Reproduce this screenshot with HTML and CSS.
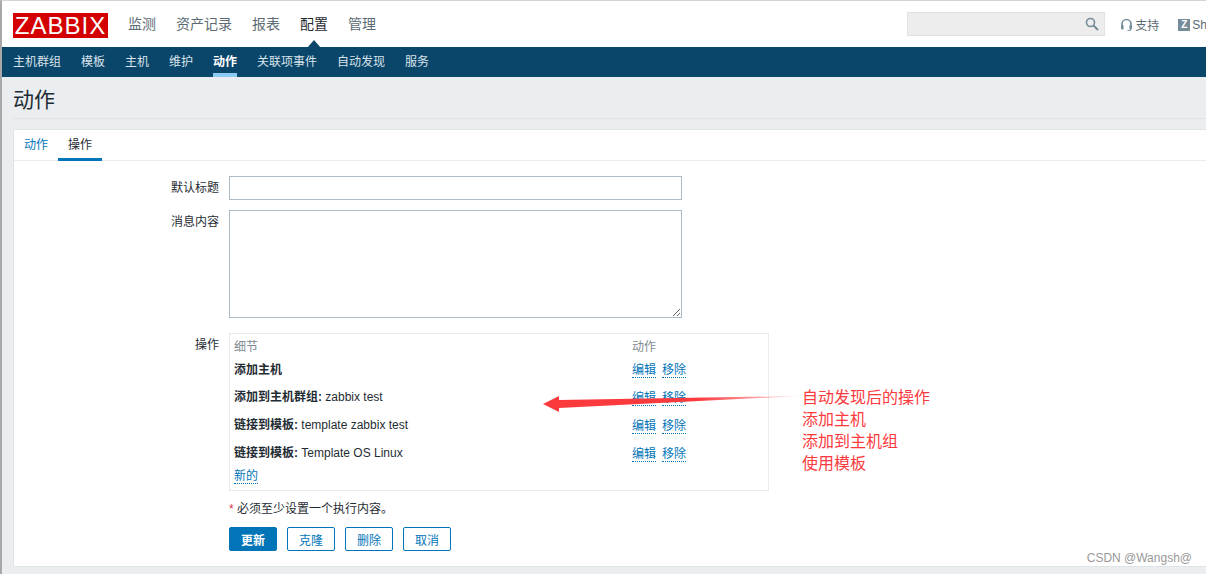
FILE: index.html
```html
<!DOCTYPE html>
<html lang="zh">
<head>
<meta charset="utf-8">
<title>动作</title>
<link rel="stylesheet" href="styles.css">
</head>
<body>
<div class="page">
  <header class="top">
    <div class="logo">ZABBIX</div>
    <nav class="main-nav">
      <a>监测</a><a>资产记录</a><a>报表</a><a class="on">配置</a><a>管理</a>
    </nav>
    <div class="top-right">
      <div class="search">
        <svg width="14" height="14" viewBox="0 0 14 14"><circle cx="5.500" cy="5.500" r="4" fill="none" stroke="#768d99" stroke-width="1.600"/><path d="M8.500 8.500L13 13" stroke="#768d99" stroke-width="2"/></svg>
      </div>
      <a class="support">
        <svg width="13" height="14" viewBox="0 0 13 14"><path d="M2 9V6a4.500 4.500 0 0 1 9 0v3" fill="none" stroke="#768d99" stroke-width="1.600"/><rect x="1" y="7" width="2.600" height="4.400" rx="1" fill="#768d99"/><rect x="9.400" y="7" width="2.600" height="4.400" rx="1" fill="#768d99"/><path d="M10.500 11v1.400H7.500" fill="none" stroke="#768d99" stroke-width="1"/></svg>
        支持
      </a>
      <a class="share"><span class="zbox">Z</span>Sh</a>
    </div>
  </header>
  <nav class="sub-nav">
    <a>主机群组</a><a>模板</a><a>主机</a><a>维护</a><a class="on">动作</a><a>关联项事件</a><a>自动发现</a><a>服务</a>
  </nav>
  <main class="content">
    <h1 class="title">动作</h1>
    <section class="card">
      <div class="tabs"><a>动作</a><a class="on">操作</a></div>
      <form class="form">
        <div class="row row-input">
          <label>默认标题</label>
          <input class="text" type="text">
        </div>
        <div class="row row-area">
          <label>消息内容</label>
          <textarea class="area"></textarea>
        </div>
        <div class="row row-ops">
          <label>操作</label>
          <div class="ops">
            <div class="ops-row ops-head"><span class="detail">细节</span><span>动作</span></div>
            <div class="ops-row r1"><span class="detail"><b>添加主机</b></span><span class="acts"><a>编辑</a><a>移除</a></span></div>
            <div class="ops-row r2"><span class="detail"><b>添加到主机群组:</b> zabbix test</span><span class="acts"><a>编辑</a><a>移除</a></span></div>
            <div class="ops-row r2"><span class="detail"><b>链接到模板:</b> template zabbix test</span><span class="acts"><a>编辑</a><a>移除</a></span></div>
            <div class="ops-row r2"><span class="detail"><b>链接到模板:</b> Template OS Linux</span><span class="acts"><a>编辑</a><a>移除</a></span></div>
            <a class="new">新的</a>
          </div>
        </div>
        <p class="note"><span class="star">*</span> 必须至少设置一个执行内容。</p>
        <div class="buttons">
          <button type="button" class="btn primary">更新</button>
          <button type="button" class="btn">克隆</button>
          <button type="button" class="btn">删除</button>
          <button type="button" class="btn">取消</button>
        </div>
      </form>
    </section>
  </main>
  <svg class="arrow" width="262" height="24" viewBox="0 0 262 24"><defs><linearGradient id="fade" x1="0" x2="1" y1="0" y2="0"><stop offset="0" stop-color="#fb3a3e"/><stop offset="0.6" stop-color="#fb3a3e"/><stop offset="1" stop-color="#fb3a3e" stop-opacity="0.1"/></linearGradient></defs><path d="M0 11L16 3L16 7L258 3L16 15L16 19Z" fill="url(#fade)"/></svg>
  <div class="annotation">自动发现后的操作<br>添加主机<br>添加到主机组<br>使用模板</div>
  <div class="mark">CSDN @Wangsh@</div>
</div>
</body>
</html>
```
FILE: styles.css
```css
* { box-sizing: border-box; }
html, body { margin: 0; height: 100%; overflow: hidden; background: #fff; }
body { font: 12px "Liberation Sans", "Noto Sans CJK SC", sans-serif; color: #1f2c33; }
a { text-decoration: none; }
.page { position: relative; width: 1206px; height: 574px; overflow: hidden; border-top: 1px solid #d4d4d4; border-left: 2px solid #a8a8a8; padding-top: 1px; }
.top { display: flex; align-items: center; height: 45px; padding-left: 11px; background: #fff; }
.logo { width: 95px; height: 25px; margin-top: 1px; background: #d40000; color: #fff; font-size: 24px; line-height: 25px; text-align: center; letter-spacing: 1px; }
.main-nav { display: flex; gap: 20px; margin: -3px 0 0 20px; font-size: 14px; color: #5c6b73; }
.main-nav a { position: relative; }
.main-nav .on { color: #1f2c33; }
.main-nav .on::after { content: ""; position: absolute; left: 7px; top: 27px; border: 7px solid transparent; border-top: 0; border-bottom-color: #0a466a; border-bottom-width: 8px; }
.top-right { display: flex; align-items: center; margin-left: auto; margin-right: -1px; color: #5c6b73; }
.search { display: flex; align-items: center; justify-content: flex-end; width: 198px; height: 24px; padding-right: 5px; background: #ededed; border: 1px solid #e2e2e2; margin-top: -1px; }
.support { display: flex; align-items: center; gap: 2px; margin-left: 15px; }
.share { display: flex; align-items: center; margin-left: 19px; }
.zbox { width: 12px; height: 12px; margin-right: 2px; background: #768d99; color: #fff; font-size: 10px; font-weight: 700; line-height: 12px; text-align: center; }
.sub-nav { display: flex; gap: 20px; height: 30px; padding-left: 11px; background: #0a466a; color: #d8e3ea; }
.sub-nav a { height: 30px; line-height: 30px; }
.sub-nav .on { color: #fff; font-weight: 700; border-bottom: 4px solid #8ccaf2; }
.content { height: 497px; padding: 0 0 0 11px; background: #ebeef0; }
.title { margin: 0; height: 42px; border-bottom: 1px solid #e0e3e6; font-size: 21px; font-weight: 400; line-height: 46px; color: #1f2c33; }
.card { width: 1300px; height: 438px; margin-top: 10px; background: #fff; border: 1px solid #dfe4e7; }
.tabs { display: flex; height: 31px; border-bottom: 1px solid #ebeef0; }
.tabs a { height: 31px; padding: 0 10px; line-height: 30px; color: #0275b8; }
.tabs .on { width: 44px; color: #1f2c33; border-bottom: 3px solid #0275b8; }
.form { padding-top: 15px; }
.row { display: flex; align-items: flex-start; }
.row label { width: 215px; padding-right: 10px; text-align: right; color: #1f2c33; }
.row-input { height: 34px; }
.row-input label { line-height: 24px; }
.text { width: 453px; height: 24px; border: 1px solid #acbbc7; background: #fff; outline: 0; }
.row-area { height: 123px; }
.row-area label { line-height: 24px; }
.area { display: block; width: 453px; height: 108px; margin: 0; border: 1px solid #acbbc7; background: #fff; outline: 0; resize: both; }
.row-ops label { line-height: 24px; }
.ops { position: relative; width: 540px; height: 158px; padding: 2px 5px 0 4px; border: 1px solid #ebebeb; }
.ops-row { display: flex; align-items: center; }
.detail { width: 398px; }
.ops-head { height: 18px; color: #7f8a90; }
.r1 { height: 27px; margin-top: 1px; }
.r2 { height: 28px; }
.r2 .detail { margin-top: -2px; }
.ops-row b { font-weight: 700; }
.acts { display: flex; gap: 6px; margin-top: 4px; }
.acts a, .new { color: #0275b8; border-bottom: 1px dotted #0275b8; line-height: 14px; }
.new { display: inline-block; margin-top: 3px; }
.note { margin: 10px 0 0 215px; height: 18px; line-height: 17px; }
.star { color: #dc3545; }
.buttons { display: flex; gap: 10px; margin: 8px 0 0 215px; }
.btn { width: 48px; height: 24px; padding: 0; background: #fff; border: 1px solid #0275b8; border-radius: 2px; color: #0275b8; font: inherit; }
.btn.primary { background: #0275b8; color: #fff; font-weight: 700; }
.arrow { position: absolute; left: 541px; top: 392px; }
.annotation { position: absolute; left: 800px; top: 386px; color: #fb3a3e; font-size: 16px; line-height: 22px; }
.mark { position: absolute; right: 14px; top: 550px; color: #999; font-size: 12px; }
```
